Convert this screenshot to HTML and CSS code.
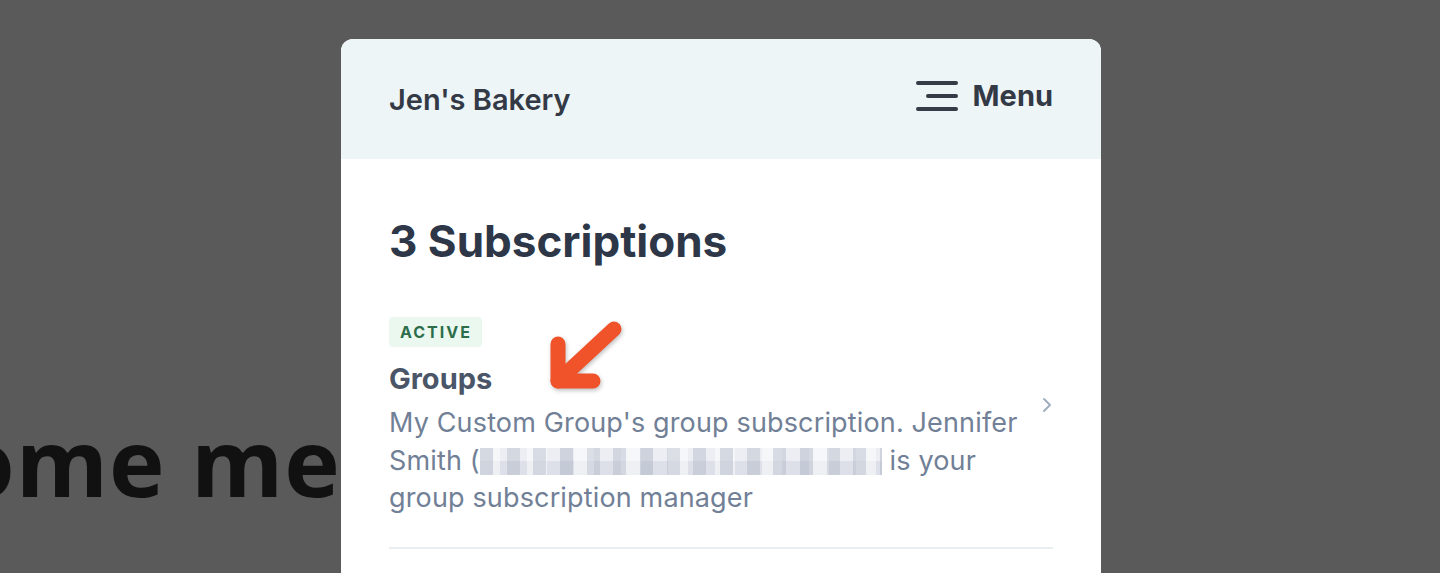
FILE: index.html
```html
<!DOCTYPE html>
<html lang="en">
<head>
  <meta charset="UTF-8">
  <meta name="viewport" content="width=device-width, initial-scale=1.0">
  <title>Jen's Bakery - Subscriptions</title>
  <link rel="stylesheet" href="styles.css">
</head>
<body>
  <div class="page">
    <h1 class="welcome">Welcome message</h1>
  </div>

  <div class="overlay">
    <div class="modal">
      <div class="modal-header">
        <span class="shop-name">Jen's Bakery</span>
        <button class="menu-btn" type="button">
          <svg class="menu-icon" width="44" height="34" viewBox="0 0 44 34">
            <line x1="3" y1="4" x2="41" y2="4" />
            <line x1="13" y1="17" x2="41" y2="17" />
            <line x1="3" y1="30" x2="41" y2="30" />
          </svg>
          <span>Menu</span>
        </button>
      </div>

      <div class="modal-body">
        <h2 class="count">3 Subscriptions</h2>

        <div class="sub-item">
          <div class="sub-info">
            <span class="badge">ACTIVE</span>
            <div class="sub-title">Groups</div>
            <p class="sub-desc">My Custom Group's group subscription. Jennifer Smith (<span class="blurred"></span> is your group subscription manager</p>
          </div>
          <svg class="chevron" width="12" height="16" viewBox="0 0 12 16">
            <polyline points="3,2 9,8 3,14" />
          </svg>
        </div>
      </div>

      <svg class="pointer" width="110" height="100" viewBox="0 0 110 100">
        <polyline points="28,25 28,62 63,62" />
        <line x1="28" y1="62" x2="84" y2="10" />
      </svg>
    </div>
  </div>
</body>
</html>
```

FILE: styles.css
```css
body {
  margin: 0;
  background-color: #5a5a5a;
  overflow: hidden;
}
.page {
  padding-top: 411px;
}
.welcome {
  margin: 0 0 0 -271px;
  font-family: "Open Sans", sans-serif;
  font-weight: 700;
  font-size: 94px;
  letter-spacing: 1px;
  line-height: 100px;
  color: #111111;
  white-space: nowrap;
}

.overlay {
  position: fixed;
  top: 0;
  left: 0;
  right: 0;
  bottom: 0;
  display: flex;
  justify-content: center;
  align-items: flex-start;
  padding-top: 39px;
}
.modal {
  position: relative;
  width: 760px;
  margin-left: 2px;
  background-color: #ffffff;
  border-radius: 12px;
  overflow: hidden;
  font-family: "Inter", sans-serif;
}
.modal-header {
  height: 120px;
  background-color: #edf5f7;
  display: flex;
  align-items: center;
  justify-content: space-between;
  padding: 0 48px;
}
.shop-name {
  font-size: 29px;
  font-weight: 600;
  color: #333a46;
  margin-top: 1px;
}
.menu-btn {
  display: flex;
  align-items: center;
  gap: 14px;
  border: none;
  background: none;
  padding: 0;
  margin-top: -7px;
  font-family: "Inter", sans-serif;
  font-size: 29px;
  font-weight: 700;
  color: #333a46;
}
.menu-icon line {
  stroke: #363c47;
  stroke-width: 4;
  stroke-linecap: round;
}

.modal-body {
  padding: 52px 48px 120px;
}
.count {
  margin: 0 0 46px;
  font-size: 44px;
  font-weight: 700;
  color: #2d3748;
  line-height: 60px;
}
.sub-item {
  display: flex;
  align-items: center;
  gap: 14px;
  padding-bottom: 30px;
  border-bottom: 2px solid #e9eef1;
}
.sub-info {
  flex: 1;
}
.badge {
  display: inline-block;
  padding: 5px 10px 5px 11px;
  background-color: #eaf8f0;
  color: #2c6e49;
  border-radius: 4px;
  font-size: 16px;
  font-weight: 700;
  letter-spacing: 2px;
  line-height: 20px;
}
.sub-title {
  margin-top: 14px;
  font-size: 29px;
  font-weight: 700;
  color: #4a5568;
  line-height: 36px;
}
.sub-desc {
  margin: 7px 0 0;
  font-size: 27px;
  letter-spacing: 0.15px;
  line-height: 37.5px;
  color: #718096;
}
.blurred {
  display: inline-block;
  width: 402px;
  height: 27px;
  vertical-align: -5px;
  background:
    repeating-linear-gradient(90deg, rgba(150,160,180,0.35) 0 13px, rgba(255,255,255,0) 13px 27px, rgba(140,150,170,0.25) 27px 40px, rgba(255,255,255,0) 40px 53px, rgba(170,178,195,0.4) 53px 66px, rgba(255,255,255,0) 66px 80px),
    repeating-linear-gradient(90deg, rgba(255,255,255,0.5) 0 20px, rgba(255,255,255,0) 20px 47px),
    linear-gradient(180deg, #eceef3 0 48%, #dde0e8 48% 100%);
}
.chevron {
  margin-top: -24px;
}
.chevron polyline {
  fill: none;
  stroke: #a0aec0;
  stroke-width: 2;
  stroke-linecap: round;
  stroke-linejoin: round;
}

.pointer {
  position: absolute;
  left: 189px;
  top: 280px;
  filter: drop-shadow(1px 2px 2px rgba(0, 0, 0, 0.25));
}
.pointer polyline,
.pointer line {
  fill: none;
  stroke: #f0522a;
  stroke-width: 15;
  stroke-linecap: round;
  stroke-linejoin: round;
}
```
